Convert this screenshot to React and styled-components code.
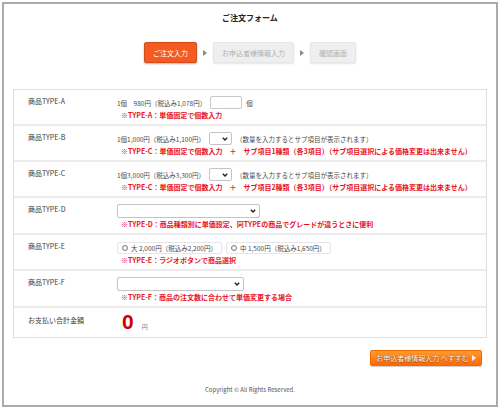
import React from 'react';
import styled, {createGlobalStyle} from 'styled-components';

const GlobalStyle = createGlobalStyle`
  html, body {
    margin: 0;
    padding: 0;
    background: #fff;
  }
  body {
    font-family: "Noto Sans CJK JP", "Noto Sans", sans-serif;
    color: #333;
  }
  * { box-sizing: border-box; }
`

const Frame = styled.div`
  margin: 2px;
  width: 496px;
  height: 405px;
  border: 2px solid #ababab;
  display: flex;
  flex-direction: column;
  align-items: center;
  padding: 9px 9px 0;
`
const Title = styled.h1`
  margin: 0;
  font-size: 8px;
  line-height: 10px;
  font-weight: bold;
  color: #222;
`
const Steps = styled.ol`
  list-style: none;
  margin: 19px 0 0;
  padding: 0;
  display: flex;
  align-items: center;
`
const Step = styled.li`
  height: 21px;
  padding: 0 8px;
  display: flex;
  align-items: center;
  font-size: 7px;
  border-radius: 2px;
  background: ${p => p.$active ? '#f45a22' : '#efefef'};
  color: ${p => p.$active ? '#fff' : '#b0b0b0'};
  border: 1px solid ${p => p.$active ? '#d44c18' : '#e6e6e6'};
  box-shadow: 0 1px 2px rgba(0, 0, 0, ${p => p.$active ? 0.3 : 0.1});
`
const StepArrow = styled.li`
  width: 16px;
  display: flex;
  justify-content: center;
  &::before {
    content: "";
    border-left: 4px solid #8a8a8a;
    border-top: 3px solid transparent;
    border-bottom: 3px solid transparent;
  }
`
const Table = styled.div`
  margin-top: 26px;
  width: 100%;
  border: 1px solid #dedede;
`
const Row = styled.div`
  display: grid;
  grid-template-columns: 103px 1fr;
  padding: ${p => p.$total ? '3px 0 4px' : '6px 0 3px'};
  & + & {
    border-top: 2px solid #ececec;
  }
`
const Label = styled.div`
  padding-left: 14px;
  font-size: 7px;
  line-height: 10px;
  color: #3a3a3a;
  margin-top: ${p => p.$total ? '4px' : '0'};
`
const Cell = styled.div`
  display: flex;
  flex-direction: column;
`
const Line = styled.div`
  display: flex;
  align-items: center;
  gap: 4px;
  min-height: 13px;
  font-size: 6.5px;
  color: #4a4a4a;
  white-space: nowrap;
`
const Note = styled.div`
  margin-top: 1px;
  padding-left: 4px;
  font-size: 7px;
  line-height: 11px;
  font-weight: bold;
  color: #e8141e;
  white-space: nowrap;
`
const QtyInput = styled.input`
  width: 32px;
  height: 13px;
  margin: 0;
  border: 1px solid #c8c8c8;
  border-radius: 2px;
  background: #fff;
`
const SelectBox = styled.span`
  display: inline-flex;
  align-items: center;
  justify-content: flex-end;
  width: ${p => p.$width}px;
  height: ${p => p.$height || 13}px;
  padding-right: 3px;
  border: 1px solid #c4c4c4;
  border-radius: 2px;
  background: #fff;
`
const RadioBox = styled.label`
  display: inline-flex;
  align-items: center;
  gap: 3px;
  height: 12px;
  padding: 0 4px;
  border: 1px solid #e6e6e6;
  border-radius: 2px;
`
const Radio = styled.input`
  appearance: none;
  width: 6px;
  height: 6px;
  margin: 0;
  border: 1px solid #777;
  border-radius: 50%;
  background: #fff;
`
const Amount = styled.div`
  display: flex;
  align-items: baseline;
  gap: 8px;
  padding-left: 5px;
`
const Big = styled.span`
  font-family: "Liberation Sans", Arial, sans-serif;
  font-size: 21px;
  line-height: 22px;
  font-weight: bold;
  color: #cc0000;
`
const Yen = styled.span`
  font-size: 6px;
  color: #777;
`
const Actions = styled.div`
  width: 100%;
  display: flex;
  justify-content: flex-end;
  padding-right: 5px;
  margin-top: 12px;
`
const NextButton = styled.button`
  height: 16px;
  width: 112px;
  padding: 0;
  display: flex;
  align-items: center;
  justify-content: center;
  gap: 3px;
  font-family: inherit;
  font-size: 7px;
  color: #fff;
  text-shadow: 0 0 1px rgba(110, 40, 0, 0.9), 0 1px 1px rgba(110, 40, 0, 0.6);
  background: linear-gradient(#ff9a30, #ff6a00);
  border: 1px solid #f06a00;
  border-radius: 2px;
  box-shadow: 0 1px 1px rgba(0, 0, 0, 0.2);
  &::after {
    content: "";
    border-left: 4px solid #fff;
    border-top: 3px solid transparent;
    border-bottom: 3px solid transparent;
  }
`
const Copyright = styled.p`
  margin: 20px 0 0;
  font-size: 6px;
  line-height: 8px;
  color: #555;
`

const Chevron = () => (
  <svg width="6" height="4" viewBox="0 0 6 4">
    <path d="M0.8 0.8 L3 3 L5.2 0.8" fill="none" stroke="#222" strokeWidth="1.4" />
  </svg>
)

const Select = ({width, height}) => (
  <SelectBox $width={width} $height={height}><Chevron /></SelectBox>
)

const products = [
  {
    label: '商品TYPE-B',
    price: '1個1,000円（税込み1,100円）',
    note: '※TYPE-C：単価固定で個数入力　＋　サブ項目1種類（各3項目）（サブ項目選択による価格変更は出来ません）',
  },
  {
    label: '商品TYPE-C',
    price: '1個3,000円（税込み3,300円）',
    note: '※TYPE-C：単価固定で個数入力　＋　サブ項目2種類（各3項目）（サブ項目選択による価格変更は出来ません）',
  },
]

const App = () => {
  return (
    <React.Fragment>
      <GlobalStyle />
      <Frame>
        <Title>ご注文フォーム</Title>
        <Steps>
          <Step $active>ご注文入力</Step>
          <StepArrow />
          <Step>お申込者様情報入力</Step>
          <StepArrow />
          <Step>確認画面</Step>
        </Steps>
        <Table>
          <Row>
            <Label>商品TYPE-A</Label>
            <Cell>
              <Line>1個　980円（税込み1,078円） <QtyInput type="text" /> 個</Line>
              <Note>※TYPE-A：単価固定で個数入力</Note>
            </Cell>
          </Row>
          {products.map(p => (
            <Row key={p.label}>
              <Label>{p.label}</Label>
              <Cell>
                <Line>{p.price} <Select width={23} /> （数量を入力するとサブ項目が表示されます）</Line>
                <Note>{p.note}</Note>
              </Cell>
            </Row>
          ))}
          <Row>
            <Label>商品TYPE-D</Label>
            <Cell>
              <Line><Select width={143} height={14} /></Line>
              <Note>※TYPE-D：商品種類別に単価設定、同TYPEの商品でグレードが違うときに便利</Note>
            </Cell>
          </Row>
          <Row>
            <Label>商品TYPE-E</Label>
            <Cell>
              <Line>
                <RadioBox><Radio type="radio" name="e" />大 2,000円（税込み2,200円）</RadioBox>
                <RadioBox><Radio type="radio" name="e" />中 1,500円（税込み1,650円）</RadioBox>
              </Line>
              <Note>※TYPE-E：ラジオボタンで商品選択</Note>
            </Cell>
          </Row>
          <Row>
            <Label>商品TYPE-F</Label>
            <Cell>
              <Line><Select width={127} height={14} /></Line>
              <Note>※TYPE-F：商品の注文数に合わせて単価変更する場合</Note>
            </Cell>
          </Row>
          <Row $total>
            <Label $total>お支払い合計金額</Label>
            <Amount>
              <Big>0</Big>
              <Yen>円</Yen>
            </Amount>
          </Row>
        </Table>
        <Actions>
          <NextButton type="button">お申込者様情報入力 へすすむ</NextButton>
        </Actions>
        <Copyright>Copyright © All Rights Reserved.</Copyright>
      </Frame>
    </React.Fragment>
  )
}

export default App
